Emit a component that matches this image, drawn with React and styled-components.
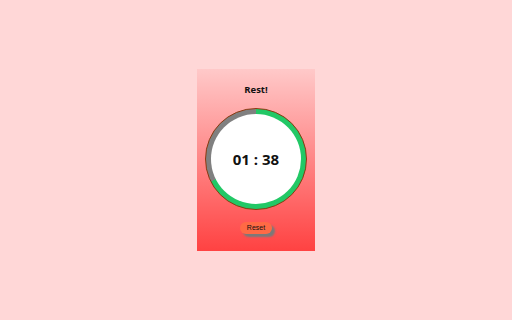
import React from 'react'
import styled, { createGlobalStyle } from 'styled-components'

const GlobalStyle = createGlobalStyle`
  html, body {
    margin: 0;
    padding: 0;
    background: #ffd7d7;
  }
  body {
    font-family: "Open Sans", "Noto Sans", sans-serif;
  }
`

const Page = styled.div`
  width: 512px;
  height: 320px;
  display: flex;
  justify-content: center;
  padding-top: 69px;
  box-sizing: border-box;
`

const Card = styled.div`
  width: 118px;
  height: 182px;
  background: linear-gradient(to bottom, #ffc9c9, #ff4242);
  display: flex;
  flex-direction: column;
  align-items: center;
  box-sizing: border-box;
  padding-top: 15px;
`

const Title = styled.h2`
  margin: 0;
  font-size: 9.5px;
  font-weight: 700;
  color: #111;
  line-height: 12px;
`

const Ring = styled.div`
  margin-top: 12px;
  width: 102px;
  height: 102px;
  border-radius: 50%;
  box-sizing: border-box;
  border: 1px solid #8b3a10;
  background: conic-gradient(#22c866 0deg ${(p) => p.$deg}deg, #808080 ${(p) => p.$deg}deg 360deg);
  display: flex;
  align-items: center;
  justify-content: center;
`

const Face = styled.div`
  width: 90px;
  height: 90px;
  border-radius: 50%;
  background: #fff;
  display: flex;
  align-items: center;
  justify-content: center;
`

const Time = styled.span`
  font-size: 15px;
  font-weight: 700;
  color: #111;
`

const ResetButton = styled.button`
  margin-top: 12px;
  width: 32px;
  height: 12px;
  border: none;
  border-radius: 6px;
  background: #ff6a45;
  box-shadow: 3px 3px 2px #7a7a7a;
  font-family: "Liberation Sans", Arial, sans-serif;
  font-size: 7px;
  line-height: 12px;
  color: #111;
  padding: 0;
  cursor: pointer;
`

export default function App() {
  const total = 145
  const left = 98
  const deg = (left / total) * 360

  return (
    <>
      <GlobalStyle />
      <Page>
        <Card>
          <Title>Rest!</Title>
          <Ring $deg={deg}>
            <Face>
              <Time>01 : 38</Time>
            </Face>
          </Ring>
          <ResetButton>Reset</ResetButton>
        </Card>
      </Page>
    </>
  )
}
